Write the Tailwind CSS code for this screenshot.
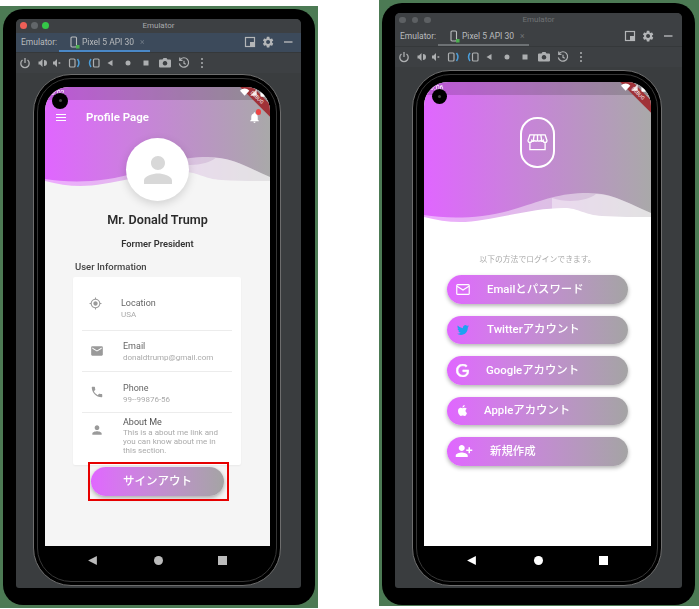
<!DOCTYPE html>
<html><head><meta charset="utf-8"><script src="https://cdn.jsdelivr.net/npm/@tailwindcss/browser@4"></script></head>
<body class="bg-white overflow-hidden font-[Roboto,'Noto_Sans_CJK_JP',sans-serif]">
<svg width="0" height="0" class="absolute">
<defs>
<linearGradient id="hg" x1="0" x2="1" y1="0" y2="0"><stop offset="0" stop-color="#e066ff"/><stop offset="1" stop-color="#a9a9a9"/></linearGradient>
<symbol id="tb" viewBox="0 0 200 16">
<g fill="none" stroke="#adafb1" stroke-width="1.300"><path d="M6.500 5a4.200 4.200 0 1 0 5 0M9 3v5"/></g>
<path fill="#adafb1" d="M22.500 6.500h1.500l2.500-2.500v8l-2.500-2.500h-1.500zM28 5a3 3 0 0 1 0 6z"/>
<path fill="#adafb1" d="M37 6.500h1.500l2.500-2.500v8l-2.500-2.500h-1.500zM42.500 7.300h1.800v1.400h-1.800z"/>
<rect x="53.500" y="4" width="5.500" height="8" rx="1" fill="none" stroke="#adafb1" stroke-width="1.200"/>
<path d="M61.500 4c1.800 2.500 1.800 5.500 0 8" fill="none" stroke="#4a9edb" stroke-width="1.500"/>
<path d="M75 4c-1.800 2.500-1.800 5.500 0 8" fill="none" stroke="#4a9edb" stroke-width="1.500"/>
<rect x="77.500" y="4" width="5.500" height="8" rx="1" fill="none" stroke="#adafb1" stroke-width="1.200"/>
<path fill="#adafb1" d="M96.500 5v6l-5-3z"/>
<circle cx="112" cy="8" r="2.500" fill="#adafb1"/>
<rect x="127.500" y="5.500" width="5" height="5" fill="#adafb1"/>
<path fill="#adafb1" fill-rule="evenodd" d="M144 4.500h2.500l1-1.500h3l1 1.500h2.500a1 1 0 0 1 1 1v6a1 1 0 0 1-1 1h-10a1 1 0 0 1-1-1v-6a1 1 0 0 1 1-1zM149 6a2.300 2.300 0 1 0 .01 0z"/>
<path fill="none" stroke="#adafb1" stroke-width="1.200" d="M164 4.800A4.700 4.700 0 1 1 163.300 8.500M163.700 2.500v2.800h2.800M168 5.800V8.300l1.800 1"/>
<g fill="#adafb1"><circle cx="186" cy="4" r="1"/><circle cx="186" cy="8" r="1"/><circle cx="186" cy="12" r="1"/></g>
</symbol>
<symbol id="devi" viewBox="0 0 10 13"><rect x="1" y="1" width="5.500" height="10" rx="1" fill="none" stroke="#b9bbbd" stroke-width="1.100"/><rect x="6" y="9" width="3.500" height="3.500" fill="#4caf50"/></symbol>
<symbol id="winr" viewBox="0 0 56 14">
<rect x="3.500" y="2.500" width="9" height="9" fill="none" stroke="#b4b6b8" stroke-width="1.200"/><rect x="8" y="7" width="5" height="5" fill="#b4b6b8"/>
<g transform="translate(19.500,0.500) scale(0.55)"><path fill="#b4b6b8" d="M19.140 12.940c.04-.3.06-.61.06-.94 0-.32-.02-.64-.07-.94l2.030-1.580c.18-.14.23-.41.12-.61l-1.920-3.320c-.12-.22-.37-.29-.59-.22l-2.390.96c-.5-.38-1.030-.7-1.620-.94l-.36-2.540c-.04-.24-.24-.41-.48-.41h-3.840c-.24 0-.43.17-.47.41l-.36 2.540c-.59.24-1.130.57-1.620.94l-2.390-.96c-.22-.08-.47 0-.59.22L2.740 8.870c-.12.21-.08.47.12.61l2.030 1.580c-.05.3-.09.63-.09.94s.02.64.07.94l-2.030 1.580c-.18.14-.23.41-.12.61l1.920 3.320c.12.22.37.29.59.22l2.390-.96c.5.38 1.030.7 1.620.94l.36 2.540c.05.24.24.41.48.41h3.840c.24 0 .44-.17.47-.41l.36-2.540c.59-.24 1.130-.56 1.620-.94l2.390.96c.22.08.47 0 .59-.22l1.920-3.320c.12-.22.07-.47-.12-.61l-2.010-1.580zM12 15.600c-1.980 0-3.600-1.620-3.600-3.600s1.620-3.600 3.600-3.600 3.600 1.620 3.600 3.600-1.620 3.600-3.600 3.600z"/></g>
<rect x="42" y="6.300" width="8.500" height="1.400" fill="#b4b6b8"/>
</symbol>
<symbol id="stat" viewBox="0 0 28 10">
<path fill="#fff" d="M0 2.500C3-.5 7-.5 10 2.500L5 8z"/><path fill="#fff" opacity=".85" d="M18 1v7h-7z"/><rect x="22" y="0" width="5" height="9" rx="1" fill="#fff"/>
</symbol>
</defs>
</svg>

<div class="flex items-start w-[699px] h-[609px] blur-[0.35px]">

<!-- LEFT -->
<div class="w-[318px] h-[602px] mt-[6px] bg-[#4c7a54] pt-[3px] px-[3px] shrink-0">
<div class="w-[312px] h-[596px] bg-black rounded-[20px] pt-[10px] pl-[13px]">
<div class="w-[285px] h-[569px] flex flex-col rounded-t-[5px] rounded-b-[3px] overflow-hidden bg-[#3a3d3f]">
  <div class="relative h-[14px] bg-[#3d4043] flex items-center justify-center text-[8px] text-[#a8aaac]">Emulator
    <div class="absolute left-[4px] top-[3px] flex gap-[4.500px]"><span class="size-[6.500px] rounded-full bg-[#ee5f57]"></span><span class="size-[6.500px] rounded-full bg-[#62666a]"></span><span class="size-[6.500px] rounded-full bg-[#35c748]"></span></div>
  </div>
  <div class="relative h-[19px] bg-[#3c4a5b] flex items-center text-[8.500px] text-[#b9bbbd] pl-[5px]">
    <span class="w-[50px]">Emulator:</span>
    <svg class="w-[10px] h-[13px] ml-[-1px]"><use href="#devi"/></svg>
    <span class="ml-[2px]">Pixel 5 API 30</span><span class="ml-[6px] text-[#6f7a86]">×</span>
    <span class="absolute left-[43px] bottom-0 w-[91px] h-[2px] bg-[#4a88c7]"></span>
    <svg class="absolute right-[3px] top-[2px] w-[56px] h-[14px]"><use href="#winr"/></svg>
  </div>
  <div class="h-[21px] bg-[#3d4043] border-t border-[#35383a] flex items-center"><svg class="w-[200px] h-[16px]"><use href="#tb"/></svg></div>
  <div class="flex-1 pl-[17px] pt-[1px]">
    <div class="relative w-[248px] h-[512px] bg-black rounded-[38px] border border-[#6e6e6e] pl-[11px] pt-[12px]">
      <div class="absolute inset-[3px] rounded-[34px] border-[1.500px] border-[#363636]"></div>
      <div class="relative w-[225px] h-[459px] bg-[#f5f5f5] rounded-t-[24px] overflow-hidden text-[#333]">
        <svg class="absolute left-0 top-0" width="225" height="110" viewBox="0 0 227 110" preserveAspectRatio="none">
          <rect width="227" height="110" fill="url(#hg)"/>
          <g transform="translate(0,-41)">
          <path fill="#fff" opacity=".45" d="M0 133C25 137 60 137 94 126C120 118 135 111 164 111C190 111 205 122 227 131V160H0z"/>
          <path fill="#fff" opacity=".4" d="M128 116C145 122 165 118 172 112C190 112 205 122 227 131V160H128z"/>
          <path fill="#f5f5f5" d="M0 135C12 138 24 140 36 140C65 140 105 126 140 126C155 126 160 133 178 134C195 135 210 135 227 135V160H0z"/>
          </g>
        </svg>
        <div class="absolute left-0 top-0 w-full h-[13px] bg-black/15"></div>
        <div class="absolute left-[6px] top-[2px] text-[7px] leading-[9px] text-white">9:02</div>
        <div class="absolute left-[177px] top-[5.500px] w-[70px] h-[9px] bg-[#a03238] rotate-45 text-[5px] leading-[9px] text-center text-white">DEBUG</div>
        <svg class="absolute right-[4px] top-[1px] w-[26px] h-[10px]"><use href="#stat"/></svg>
        <div class="absolute left-[7px] top-[5.500px] size-[16px] rounded-full bg-black flex items-center justify-center"><i class="size-[3px] rounded-full bg-[#444]"></i></div>
        <div class="relative h-[40px] pt-[21px] flex items-center text-white">
          <div class="ml-[11px] w-[10px] flex flex-col gap-[2px]"><i class="h-[1.300px] bg-white"></i><i class="h-[1.300px] bg-white"></i><i class="h-[1.300px] bg-white"></i></div>
          <span class="ml-[20px] text-[11.500px] font-semibold">Profile Page</span>
          <span class="relative ml-auto mr-[9px] size-[13px]"><svg viewBox="0 0 24 24" class="size-[13px]" fill="#fff"><path d="M12 22c1.100 0 2-.9 2-2h-4c0 1.100.89 2 2 2zm6-6v-5c0-3.070-1.640-5.640-4.500-6.320V4c0-.83-.67-1.500-1.500-1.500s-1.500.67-1.500 1.500v.68C7.630 5.360 6 7.920 6 11v5l-2 2v1h16v-1l-2-2z"/></svg><i class="absolute right-[0px] top-[-2px] size-[5.500px] rounded-full bg-[#ee4444]"></i></span>
        </div>
        <div class="relative flex flex-col items-center">
          <div class="mt-[11px] size-[63px] rounded-full bg-white shadow-[0_3px_10px_rgba(0,0,0,0.15)] flex items-center justify-center"><svg viewBox="0 0 24 24" class="size-[42px]" fill="#d8d8d8"><path d="M12 12c2.210 0 4-1.790 4-4s-1.790-4-4-4-4 1.790-4 4 1.790 4 4 4zm0 2c-2.670 0-8 1.340-8 4v2h16v-2c0-2.660-5.330-4-8-4z"/></svg></div>
          <div class="mt-[10px] h-[18px] leading-[18px] text-[12.600px] font-semibold text-[#2b2b2b]">Mr. Donald Trump</div>
          <div class="mt-[9px] h-[12px] leading-[12px] text-[9.300px] font-semibold text-[#333]">Former President</div>
        </div>
        <div class="relative ml-[30px] mt-[11px] h-[12px] leading-[12px] text-[9.500px] font-medium text-[#444]">User Information</div>
        <div class="relative ml-[28px] mt-[4px] w-[168px] h-[188px] bg-white rounded-[2px] shadow-[0_1px_2px_rgba(0,0,0,0.05)]">
          <div class="h-[54px] mx-[9px] border-b border-[#ececec] flex items-center pt-[10px]">
            <svg viewBox="0 0 24 24" class="ml-[7px] mb-[10px] size-[13px]" fill="#9a9a9a"><path d="M12 8c-2.210 0-4 1.790-4 4s1.790 4 4 4 4-1.790 4-4-1.790-4-4-4zm8.940 3c-.46-4.170-3.770-7.480-7.940-7.940V1h-2v2.060C6.830 3.520 3.520 6.830 3.060 11H1v2h2.060c.46 4.170 3.770 7.480 7.940 7.940V23h2v-2.060c4.170-.46 7.480-3.770 7.940-7.940H23v-2h-2.060zM12 19c-3.870 0-7-3.130-7-7s3.130-7 7-7 7 3.130 7 7-3.130 7-7 7z"/></svg>
            <div class="ml-[19px]"><div class="text-[9px] leading-[11px] text-[#666]">Location</div><div class="text-[8px] leading-[11px] text-[#aaa]">USA</div></div>
          </div>
          <div class="h-[41px] mx-[9px] border-b border-[#ececec] flex items-center pt-[2px]">
            <svg viewBox="0 0 24 24" class="ml-[8px] mb-[2px] size-[14px]" fill="#9a9a9a"><path d="M20 4H4c-1.100 0-1.990.9-1.990 2L2 18c0 1.100.9 2 2 2h16c1.100 0 2-.9 2-2V6c0-1.100-.9-2-2-2zm0 4l-8 5-8-5V6l8 5 8-5v2z"/></svg>
            <div class="ml-[19px]"><div class="text-[9px] leading-[11px] text-[#666]">Email</div><div class="text-[8px] leading-[11px] text-[#aaa]">donaldtrump@gmail.com</div></div>
          </div>
          <div class="h-[41px] mx-[9px] border-b border-[#ececec] flex items-center pt-[3px]">
            <svg viewBox="0 0 24 24" class="ml-[8px] mb-[3px] size-[14px]" fill="#9a9a9a"><path d="M6.620 10.790c1.440 2.830 3.760 5.140 6.590 6.590l2.200-2.200c.27-.27.67-.36 1.020-.24 1.120.37 2.330.57 3.570.57.55 0 1 .45 1 1V20c0 .55-.45 1-1 1-9.390 0-17-7.610-17-17 0-.55.45-1 1-1h3.500c.55 0 1 .45 1 1 0 1.250.2 2.450.57 3.570.11.35.03.74-.25 1.020l-2.200 2.200z"/></svg>
            <div class="ml-[19px]"><div class="text-[9px] leading-[11px] text-[#666]">Phone</div><div class="text-[8px] leading-[11px] text-[#aaa]">99--99876-56</div></div>
          </div>
          <div class="mx-[9px] flex items-start pt-[4px]">
            <svg viewBox="0 0 24 24" class="ml-[8px] mt-[6px] size-[14px]" fill="#9a9a9a"><path d="M12 12c2.210 0 4-1.790 4-4s-1.790-4-4-4-4 1.790-4 4 1.790 4 4 4zm0 2c-2.670 0-8 1.340-8 4v2h16v-2c0-2.660-5.330-4-8-4z"/></svg>
            <div class="ml-[19px] w-[105px]"><div class="text-[9px] leading-[11px] text-[#555]">About Me</div><div class="text-[8px] leading-[9px] text-[#aaa]">This is a about me link and you can know about me in this section.</div></div>
          </div>
        </div>
        <div class="relative ml-[46px] mt-[2px] w-[133px] h-[29px] rounded-full bg-linear-to-r from-[#e066ff] to-[#a4a4a4] shadow-[0_2px_4px_rgba(0,0,0,0.3)] flex items-center justify-center text-white text-[11.500px] font-medium">サインアウト
          <div class="absolute left-[-3px] right-[-5px] top-[-5px] bottom-[-5px] border-2 border-[#e60000]"></div>
        </div>
      </div>
      <div class="relative w-[225px] h-[29px] flex items-center justify-between pl-[42px] pr-[43px]">
        <svg viewBox="0 0 10 10" class="size-[11px]"><path fill="#bbb" d="M9 1v8L1 5z"/></svg>
        <span class="size-[9px] rounded-full bg-[#bbb]"></span>
        <span class="size-[9px] bg-[#bbb]"></span>
      </div>
    </div>
  </div>
</div>
</div>
</div>

<!-- RIGHT -->
<div class="w-[320px] h-[606px] ml-[61px] bg-[#4c7a54] pt-[3px] pl-[3px] shrink-0">
<div class="w-[313px] h-[602px] bg-black rounded-[20px] pt-[10px] pl-[13px]">
<div class="w-[287px] h-[575px] flex flex-col rounded-t-[5px] rounded-b-[3px] overflow-hidden bg-[#3a3d3f]">
  <div class="relative h-[14px] bg-[#3d4043] flex items-center justify-center text-[8px] text-[#6f7274]">Emulator
    <div class="absolute left-[4px] top-[3.500px] flex gap-[6px]"><span class="size-[6.500px] rounded-full bg-[#5d6063]"></span><span class="size-[6.500px] rounded-full bg-[#5d6063]"></span><span class="size-[6.500px] rounded-full bg-[#5d6063]"></span></div>
  </div>
  <div class="relative h-[19px] bg-[#3d4043] flex items-center text-[8.500px] text-[#b9bbbd] pl-[5px]">
    <span class="w-[50px]">Emulator:</span>
    <svg class="w-[10px] h-[13px]"><use href="#devi"/></svg>
    <span class="ml-[2px]">Pixel 5 API 30</span><span class="ml-[6px] text-[#6f7274]">×</span>
    <span class="absolute left-[43px] bottom-0 w-[91px] h-[2px] bg-[#6d7174]"></span>
    <svg class="absolute right-[4px] top-[2px] w-[56px] h-[14px]"><use href="#winr"/></svg>
  </div>
  <div class="h-[21px] bg-[#3d4043] border-t border-[#35383a] flex items-center"><svg class="w-[200px] h-[16px]"><use href="#tb"/></svg></div>
  <div class="flex-1 pl-[17px] pt-[3px]">
    <div class="relative w-[250px] h-[516px] bg-black rounded-[38px] border border-[#6e6e6e] pl-[11px] pt-[11px]">
      <div class="absolute inset-[3px] rounded-[34px] border-[1.500px] border-[#363636]"></div>
      <div class="relative w-[227px] h-[464px] bg-white rounded-t-[24px] overflow-hidden">
        <svg class="absolute left-0 top-0" width="227" height="160" viewBox="0 0 227 160">
          <rect width="227" height="160" fill="url(#hg)"/>
          <path fill="#fff" opacity=".45" d="M0 133C25 137 60 137 94 126C120 118 135 111 164 111C190 111 205 122 227 131V160H0z"/>
          <path fill="#fff" opacity=".4" d="M128 116C145 122 165 118 172 112C190 112 205 122 227 131V160H128z"/>
          <path fill="#fff" d="M0 135C12 138 24 140 36 140C65 140 105 126 140 126C155 126 160 133 178 134C195 135 210 135 227 135V160H0z"/>
        </svg>
        <div class="absolute left-0 top-0 w-full h-[13px] bg-black/15"></div>
        <div class="absolute left-[6px] top-[2px] text-[7px] leading-[9px] text-white">9:06</div>
        <div class="absolute left-[179px] top-[6.500px] w-[70px] h-[9px] bg-[#a03238] rotate-45 text-[5px] leading-[9px] text-center text-white">DEBUG</div>
        <svg class="absolute right-[4px] top-[1px] w-[26px] h-[10px]"><use href="#stat"/></svg>
        <div class="absolute left-[8px] top-[7px] size-[15px] rounded-full bg-black flex items-center justify-center"><i class="size-[3px] rounded-full bg-[#444]"></i></div>
        <div class="relative flex flex-col items-center">
          <div class="mt-[35px] w-[35px] h-[51px] rounded-[17px] border-2 border-white flex items-center justify-center">
            <svg viewBox="0 0 22 20" class="w-[21px] h-[19px]" fill="none" stroke="#fff" stroke-width="1.400"><path d="M3 2h16l2 6a2 2 0 0 1-4 0 2 2 0 0 1-3 0 2.500 2.500 0 0 1-3 0 2.500 2.500 0 0 1-3 0 2 2 0 0 1-3 0 2 2 0 0 1-4 0zM7.500 2.200L6.500 8M11 2v6M14.500 2.200l1 5.800M3 10.500V17.500H19V10.500"/></svg>
          </div>
          <div class="mt-[86px] h-[12px] leading-[12px] text-[7.800px] text-[#aaa]">以下の方法でログインできます。</div>
        </div>
        <div class="relative ml-[23px] mt-[9px] w-[181px] flex flex-col gap-[12px] text-white text-[11.400px] font-medium">
          <div class="h-[28.500px] rounded-full bg-linear-to-r from-[#e066ff] to-[#a4a4a4] shadow-[0_2px_4px_rgba(0,0,0,0.3)] flex items-center pl-[9px]">
            <svg viewBox="0 0 15 12" class="w-[14px] h-[11px]" fill="none" stroke="#fff" stroke-width="1.300"><rect x=".7" y=".7" width="13.600" height="10.600" rx="1"/><path d="M1 2.500l6.500 4 6.500-4"/></svg>
            <span class="ml-[17px]">Emailとパスワード</span></div>
          <div class="h-[28.500px] rounded-full bg-linear-to-r from-[#e066ff] to-[#a4a4a4] shadow-[0_2px_4px_rgba(0,0,0,0.3)] flex items-center pl-[10px]">
            <svg viewBox="0 0 24 24" class="size-[12px]" fill="#1da1f2"><path d="M23.953 4.570a10 10 0 01-2.825.775 4.958 4.958 0 002.163-2.723c-.951.555-2.005.959-3.127 1.184a4.920 4.920 0 00-8.384 4.482C7.690 8.095 4.067 6.130 1.640 3.162a4.822 4.822 0 00-.666 2.475c0 1.710.870 3.213 2.188 4.096a4.904 4.904 0 01-2.228-.616v.060a4.923 4.923 0 003.946 4.827 4.996 4.996 0 01-2.212.085 4.936 4.936 0 004.604 3.417 9.867 9.867 0 01-6.102 2.105c-.39 0-.779-.023-1.170-.067a13.995 13.995 0 007.557 2.209c9.053 0 13.998-7.496 13.998-13.985 0-.21 0-.42-.015-.63A9.935 9.935 0 0024 4.590z"/></svg>
            <span class="ml-[18px]">Twitterアカウント</span></div>
          <div class="h-[28.500px] rounded-full bg-linear-to-r from-[#e066ff] to-[#a4a4a4] shadow-[0_2px_4px_rgba(0,0,0,0.3)] flex items-center pl-[9px]">
            <svg viewBox="0 0 24 24" class="size-[13px]" fill="#fff" stroke="#fff" stroke-width="1"><path d="M12.480 10.920v3.280h7.840c-.24 1.840-.853 3.187-1.787 4.133-1.147 1.147-2.933 2.400-6.053 2.400-4.827 0-8.600-3.893-8.600-8.720s3.773-8.720 8.600-8.720c2.600 0 4.507 1.027 5.907 2.347l2.307-2.307C18.747 1.440 16.133 0 12.480 0 5.867 0 .307 5.387.307 12s5.560 12 12.173 12c3.573 0 6.267-1.173 8.373-3.360 2.160-2.160 2.840-5.213 2.840-7.667 0-.76-.053-1.467-.173-2.053H12.480z"/></svg>
            <span class="ml-[17px]">Googleアカウント</span></div>
          <div class="h-[28.500px] rounded-full bg-linear-to-r from-[#e066ff] to-[#a4a4a4] shadow-[0_2px_4px_rgba(0,0,0,0.3)] flex items-center pl-[10px]">
            <svg viewBox="0 0 24 24" class="size-[11px]" fill="#fff"><path d="M12.152 6.896c-.948 0-2.415-1.078-3.960-1.040-2.040.027-3.910 1.183-4.961 3.014-2.117 3.675-.546 9.103 1.519 12.090 1.013 1.454 2.208 3.090 3.792 3.039 1.520-.065 2.090-.987 3.935-.987 1.831 0 2.350.987 3.960.948 1.637-.026 2.676-1.480 3.676-2.948 1.156-1.688 1.636-3.325 1.662-3.415-.039-.013-3.182-1.221-3.220-4.857-.026-3.040 2.480-4.494 2.597-4.559-1.429-2.090-3.623-2.324-4.390-2.376-2-.156-3.675 1.090-4.610 1.090zM15.530 3.830c.843-1.012 1.400-2.427 1.245-3.830-1.207.052-2.662.805-3.532 1.818-.78.896-1.454 2.338-1.273 3.714 1.338.104 2.715-.688 3.559-1.701"/></svg>
            <span class="ml-[16px]">Appleアカウント</span></div>
          <div class="h-[28.500px] rounded-full bg-linear-to-r from-[#e066ff] to-[#a4a4a4] shadow-[0_2px_4px_rgba(0,0,0,0.3)] flex items-center pl-[8px]">
            <svg viewBox="0 0 24 24" class="size-[18px] -scale-x-100" fill="#fff"><path d="M15 12c2.210 0 4-1.790 4-4s-1.790-4-4-4-4 1.790-4 4 1.790 4 4 4zm-9-2V7H4v3H1v2h3v3h2v-3h3v-2H6zm9 4c-2.670 0-8 1.340-8 4v2h16v-2c0-2.660-5.330-4-8-4z"/></svg>
            <span class="ml-[17px]">新規作成</span></div>
        </div>
      </div>
      <div class="relative w-[227px] h-[29px] flex items-center justify-between pl-[42px] pr-[43px]">
        <svg viewBox="0 0 10 10" class="size-[11px]"><path fill="#fff" d="M9 1v8L1 5z"/></svg>
        <span class="size-[9px] rounded-full bg-white"></span>
        <span class="size-[9px] bg-white"></span>
      </div>
    </div>
  </div>
</div>
</div>
</div>

</div>
</body></html>
